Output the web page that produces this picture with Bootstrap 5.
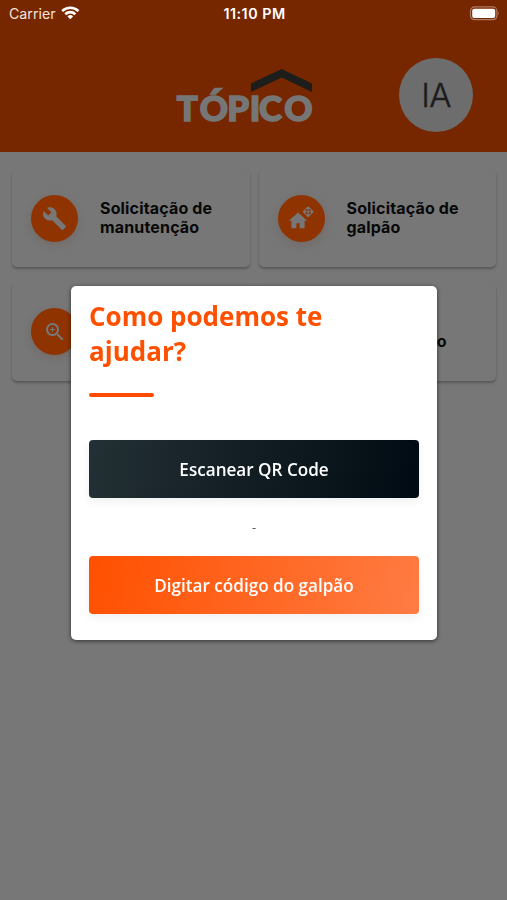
<!DOCTYPE html>
<html lang="pt-BR">
<head>
<meta charset="utf-8">
<meta name="viewport" content="width=device-width, initial-scale=1">
<title>Tópico</title>
<link href="https://cdn.jsdelivr.net/npm/bootstrap@5.3.0/dist/css/bootstrap.min.css" rel="stylesheet">
<style>
body{background:#777;font-family:Inter,"Liberation Sans",sans-serif;height:900px;overflow:hidden;color:#080808}
.app-top{background:#762700;height:152px}
.status{height:28px;padding:0 7px 0 9px;font-size:14.2px;color:#f5e3da}
.status>div{flex:1 1 0}
.status svg{margin-top:-2px}
.clock{font-weight:600;font-size:14.3px;letter-spacing:.5px;color:#fff}
.brand-row{height:124px;padding:0 34px 0 176px}
.logo{margin-top:14px;overflow:visible}
.avatar{width:74px;height:74px;background:#6d6d6d;font-size:33px;font-weight:300;letter-spacing:-.6px;color:#1c1c1c;-webkit-text-stroke:.4px #1c1c1c;margin-top:10px;padding-top:2px}
.tiles{padding:17px 11px 0 12px;display:grid;grid-template-columns:1fr 1fr;gap:15.5px 9px}
.tile{height:98px;border:0;border-radius:5px;background:#777;padding:0 18px 0 19px;box-shadow:0 2px 2.5px rgba(0,0,0,.26)}
.disc{width:47px;height:47px;background:#8f3300;box-shadow:0 3px 9px rgba(100,55,35,.2)}
.tile-label{margin-left:22px;font-weight:700;font-size:16px;line-height:19px;letter-spacing:.16px}
.tile-label.wide{letter-spacing:.5px}
.help{font-family:"Open Sans","Noto Sans",sans-serif}
.help .modal-dialog{width:366px;max-width:366px;margin:286px 0 0 71px;transform:none}
.help .modal-content{height:354px;border:0;border-radius:5px;padding:13px 18px 0;box-shadow:0 1px 4px rgba(0,0,0,.6)}
.help h1{font-size:26px;line-height:35px;font-weight:700;color:#ff5000;margin:0}
.rule{width:65px;height:4px;background:#ff4b00;border-radius:2px;margin-top:24px}
.action{height:58px;border:0;border-radius:4px;color:#fff;font-size:17.1px;font-weight:600;padding:2px 0 0;box-shadow:0 4px 8px rgba(0,0,0,.06)}
.action:hover{color:#fff}
.scan{background:linear-gradient(100deg,#233034,#000a12);margin-top:43px}
.code{background:linear-gradient(100deg,#ff5000,#ff7c43)}
.sep{height:58px;font-size:13px;color:#555;padding-top:2px}
</style>
</head>
<body>
<header class="app-top">
  <div class="status d-flex align-items-center">
    <div class="d-flex align-items-center"><span>Carrier</span>
      <svg class="ms-1" width="21" height="16" viewBox="0 0 21 16" fill="none" stroke="#fff" stroke-width="2.7"><path d="M2.2 6.1a11.5 11.5 0 0 1 16.2 0M5.3 9.2a7.2 7.2 0 0 1 10 0"/><path d="M7.5 11.4a4 4 0 0 1 5.6 0l-2.8 2.9z" fill="#fff" stroke="none"/></svg>
    </div>
    <span class="clock">11:10 PM</span>
    <div class="d-flex justify-content-end">
      <svg width="31" height="15" viewBox="0 0 31 15"><rect x="1.5" y=".9" width="26.4" height="12.8" rx="4" fill="none" stroke="#b17a62" stroke-width="1.2"/><rect x="3.2" y="2.7" width="23" height="9.2" rx="2" fill="#fff"/><path d="M29.2 5.4q1.6 1.9 0 3.8z" fill="#b17a62"/></svg>
    </div>
  </div>
  <div class="brand-row d-flex align-items-center justify-content-between">
    <svg class="logo" width="138" height="56" viewBox="0 0 138 56" role="img" aria-label="Tópico">
      <path d="M75 14.5 105.7 0 136 14.5V23L105.7 8.500 75 23z" fill="#1d1d1b"/>
      <text transform="scale(1.04 1)" y="52" x=".8 22.8 49.3 71 79.800 104" font-family="Lato,sans-serif" font-weight="900" font-size="33.5" fill="#767676" stroke="#767676" stroke-width="1.5">TÓPICO</text>
    </svg>
    <div class="avatar rounded-circle d-flex align-items-center justify-content-center">IA</div>
  </div>
</header>
<main class="tiles">
  <div class="tile card flex-row align-items-center">
    <div class="disc rounded-circle flex-shrink-0 d-flex align-items-center justify-content-center"><svg width="25" height="25" viewBox="0 0 24 24" fill="#777"><path d="m22.7 19-9.1-9.1c.9-2.3.4-5-1.5-6.9-2-2-5-2.4-7.4-1.3L9 6 6 9 1.6 4.7C.4 7.1.9 10.1 2.9 12.1c1.9 1.9 4.6 2.4 6.9 1.5l9.1 9.1c.4.4 1 .4 1.4 0l2.3-2.3c.5-.4.5-1.1.1-1.4z"/></svg></div>
    <div class="tile-label">Solicitação de manutenção</div>
  </div>
  <div class="tile card flex-row align-items-center">
    <div class="disc rounded-circle flex-shrink-0 d-flex align-items-center justify-content-center"><svg width="26" height="24" viewBox="0 0 26 24" fill="#777"><path d="M10 6.5.8 14.8h2.600v7.500h5v-5h3.200v5h5v-7.500h2.600z"/><g fill="none" stroke="#777" stroke-width="1.1"><path d="M20.200 1v9.500M15.400 5.700h9.600"/><path d="M18.300 2.600l1.900-1.700 1.900 1.700zM18.300 8.800l1.900 1.700 1.900-1.700zM17.100 3.800 15.400 5.700l1.700 1.900zM23.300 3.800 25 5.700l-1.700 1.900z" fill="#777"/></g></svg></div>
    <div class="tile-label">Solicitação de galpão</div>
  </div>
  <div class="tile card flex-row align-items-center">
    <div class="disc rounded-circle flex-shrink-0 d-flex align-items-center justify-content-center"><svg width="24" height="24" viewBox="0 0 24 24" fill="#777"><path d="M15.5 14h-.79l-.28-.27A6.5 6.5 0 1 0 13.73 14.43l.27.28v.79l5 4.99L20.49 19zM9.500 14a4.500 4.500 0 1 1 0-9 4.500 4.500 0 0 1 0 9zM12 10h-2v2H9v-2H7V9h2V7h1v2h2z"/></svg></div>
  </div>
  <div class="tile card flex-row align-items-center">
    <div class="disc rounded-circle flex-shrink-0"></div>
    <div class="tile-label wide">Vistoria<br>de inspeção</div>
  </div>
</main>
<div class="modal d-block help" tabindex="-1" role="dialog" aria-modal="true">
  <div class="modal-dialog">
    <div class="modal-content">
      <h1>Como podemos te ajudar?</h1>
      <div class="rule"></div>
      <button type="button" class="btn action scan w-100">Escanear QR Code</button>
      <div class="sep d-flex align-items-center justify-content-center">-</div>
      <button type="button" class="btn action code w-100">Digitar código do galpão</button>
    </div>
  </div>
</div>
<script src="https://cdn.jsdelivr.net/npm/bootstrap@5.3.0/dist/js/bootstrap.bundle.min.js"></script>
</body>
</html>
